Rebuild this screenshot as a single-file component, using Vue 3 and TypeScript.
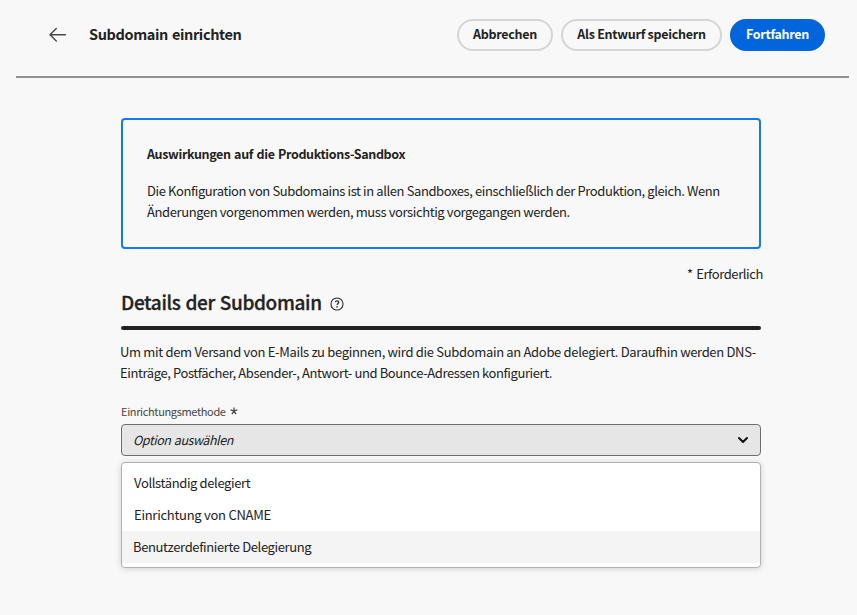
<script setup lang="ts">
import { ref } from 'vue'

interface SetupOption {
  id: string
  label: string
}

const introLines: string[] = [
  'Um mit dem Versand von E-Mails zu beginnen, wird die Subdomain an Adobe delegiert. Daraufhin werden DNS-',
  'Einträge, Postfächer, Absender-, Antwort- und Bounce-Adressen konfiguriert.',
]

const noticeLines: string[] = [
  'Die Konfiguration von Subdomains ist in allen Sandboxes, einschließlich der Produktion, gleich. Wenn',
  'Änderungen vorgenommen werden, muss vorsichtig vorgegangen werden.',
]

const options: SetupOption[] = [
  { id: 'full', label: 'Vollständig delegiert' },
  { id: 'cname', label: 'Einrichtung von CNAME' },
  { id: 'custom', label: 'Benutzerdefinierte Delegierung' },
]

const highlighted = ref<string>('custom')
</script>

<template>
  <div class="page">
    <header class="header">
      <button class="back" type="button">
        <svg width="18" height="16" viewBox="0 0 18 16" fill="none" stroke="#464646" stroke-width="1.4" stroke-linecap="round" stroke-linejoin="round">
          <path d="M7.3 1.6 1 7.8l6.3 6.2M1.2 7.8h15.2" />
        </svg>
      </button>
      <h1 class="title">Subdomain einrichten</h1>
      <div class="actions">
        <button class="btn cancel" type="button">Abbrechen</button>
        <button class="btn draft" type="button">Als Entwurf speichern</button>
        <button class="btn primary" type="button">Fortfahren</button>
      </div>
    </header>

    <main class="content">
      <section class="notice">
        <h2 class="notice-title">Auswirkungen auf die Produktions-Sandbox</h2>
        <p class="notice-text">
          <span v-for="line in noticeLines" :key="line" class="line">{{ line }}</span>
        </p>
      </section>

      <div class="required">* Erforderlich</div>

      <div class="heading">
        <h2 class="heading-text">Details der Subdomain</h2>
        <svg class="help" width="14" height="14" viewBox="0 0 14 14" fill="none" stroke="#2c2c2c">
          <circle cx="7" cy="7" r="6.05" stroke-width="1.1" />
          <path d="M5.3 5.05C5.5 4.2 6.2 3.75 7.1 3.75c1 0 1.65.55 1.65 1.35 0 1.35-1.65 1.35-1.65 2.9" stroke-width="1.25" />
          <circle cx="7.05" cy="9.9" r=".8" fill="#2c2c2c" stroke="none" />
        </svg>
      </div>
      <div class="rule"></div>

      <p class="intro">
        <span v-for="line in introLines" :key="line" class="line">{{ line }}</span>
      </p>

      <div class="label">
        <span>Einrichtungsmethode</span>
        <svg width="8" height="8" viewBox="0 0 8 8" fill="none" stroke="#464646" stroke-width="1.3">
          <path d="M4 4V.5M4 4 .6 2.9M4 4l3.4-1.1M4 4 1.9 7.2M4 4l2.1 3.2" />
        </svg>
      </div>

      <div class="select">
        <span class="placeholder">Option auswählen</span>
        <svg width="12" height="8" viewBox="0 0 12 8" fill="none" stroke="#111" stroke-width="2" stroke-linecap="round" stroke-linejoin="round">
          <path d="M2 2l4 4 4-4" />
        </svg>
      </div>

      <ul class="menu">
        <li
          v-for="option in options"
          :key="option.id"
          :class="['option', option.id, { active: option.id === highlighted }]"
          @mouseenter="highlighted = option.id"
        >
          {{ option.label }}
        </li>
      </ul>
    </main>
  </div>
</template>

<style>
body {
  margin: 0;
  background: #f8f8f8;
}
</style>

<style scoped>
.page {
  box-sizing: border-box;
  width: 857px;
  height: 615px;
  overflow: hidden;
  background: #f8f8f8;
  color: #222;
  font-family: "Noto Sans CJK JP", "Noto Sans", sans-serif;
  font-size: 13px;
}

h1,
h2,
p,
ul {
  margin: 0;
  padding: 0;
}

button {
  font-family: inherit;
  padding: 0;
}

.header {
  box-sizing: border-box;
  height: 78px;
  margin: 0 8px 0 16px;
  padding: 19px 24px 0 33px;
  display: flex;
  align-items: flex-start;
  border-bottom: 2px solid #909090;
}

.back {
  display: flex;
  align-items: center;
  width: 18px;
  height: 32px;
  border: 0;
  background: none;
}

.title {
  margin-left: 22px;
  font-size: 14.5px;
  line-height: 30px;
  font-weight: 700;
  letter-spacing: -0.37px;
  word-spacing: 1px;
  white-space: nowrap;
}

.actions {
  display: flex;
  gap: 8px;
  margin-left: auto;
}

.btn {
  box-sizing: border-box;
  height: 32px;
  padding-bottom: 2px;
  border: 2px solid #d5d5d5;
  border-radius: 16px;
  background: transparent;
  color: #222;
  font-size: 12.5px;
  line-height: 26px;
  font-weight: 700;
  letter-spacing: -0.28px;
  white-space: nowrap;
}

.cancel {
  width: 96px;
}

.draft {
  width: 161px;
}

.primary {
  width: 95px;
  border-color: #0265dc;
  background: #0265dc;
  color: #fff;
}

.content {
  width: 640px;
  margin-left: 121px;
  padding-top: 40px;
}

.notice {
  box-sizing: border-box;
  height: 131px;
  padding: 24px;
  border: 2px solid #147af3;
  border-radius: 4px;
}

.notice-title {
  font-size: 12.5px;
  line-height: 20px;
  font-weight: 700;
  letter-spacing: -0.36px;
  word-spacing: 1px;
}

.notice-text {
  margin-top: 16px;
}

.line {
  display: block;
  line-height: 21px;
  letter-spacing: -0.4px;
  white-space: nowrap;
}

.required {
  margin: 15px -2px 0 0;
  line-height: 20px;
  letter-spacing: -0.4px;
  text-align: right;
  word-spacing: 1px;
}

.heading {
  display: flex;
  align-items: center;
  height: 34px;
  margin-top: 1px;
}

.heading-text {
  font-size: 19px;
  line-height: 34px;
  font-weight: 500;
  letter-spacing: -0.36px;
  word-spacing: 1px;
  -webkit-text-stroke: 0.3px #222;
}

.help {
  margin: 4px 0 0 8px;
}

.rule {
  height: 4px;
  margin-top: 7px;
  border-radius: 2px;
  background: #222;
}

.intro {
  margin: 11px 0 0 -1px;
}

.intro .line:first-child {
  letter-spacing: -0.325px;
}

.label {
  display: flex;
  align-items: center;
  gap: 4px;
  height: 20px;
  margin-top: 18px;
  color: #464646;
  font-size: 11px;
  letter-spacing: -0.35px;
}

.select {
  box-sizing: border-box;
  height: 32px;
  margin-top: 3px;
  padding: 0 11px;
  display: flex;
  align-items: center;
  justify-content: space-between;
  border: 1px solid #6d6d6d;
  border-radius: 4px;
  background: #e6e6e6;
}

.placeholder {
  padding-bottom: 2px;
  font-size: 12.5px;
  font-style: italic;
  letter-spacing: -0.45px;
  word-spacing: 1px;
}

.menu {
  box-sizing: border-box;
  height: 106px;
  margin-top: 6px;
  padding: 4px 0;
  border: 1px solid #b1b1b1;
  border-radius: 4px;
  background: #fff;
  box-shadow: 0 1px 6px rgba(0, 0, 0, 0.16);
  list-style: none;
}

.option {
  height: 32px;
  padding-left: 12px;
  line-height: 32px;
  letter-spacing: -0.37px;
}

.cname {
  letter-spacing: -0.27px;
}

.active {
  padding-left: 11px;
  background: #f4f4f4;
}
</style>
